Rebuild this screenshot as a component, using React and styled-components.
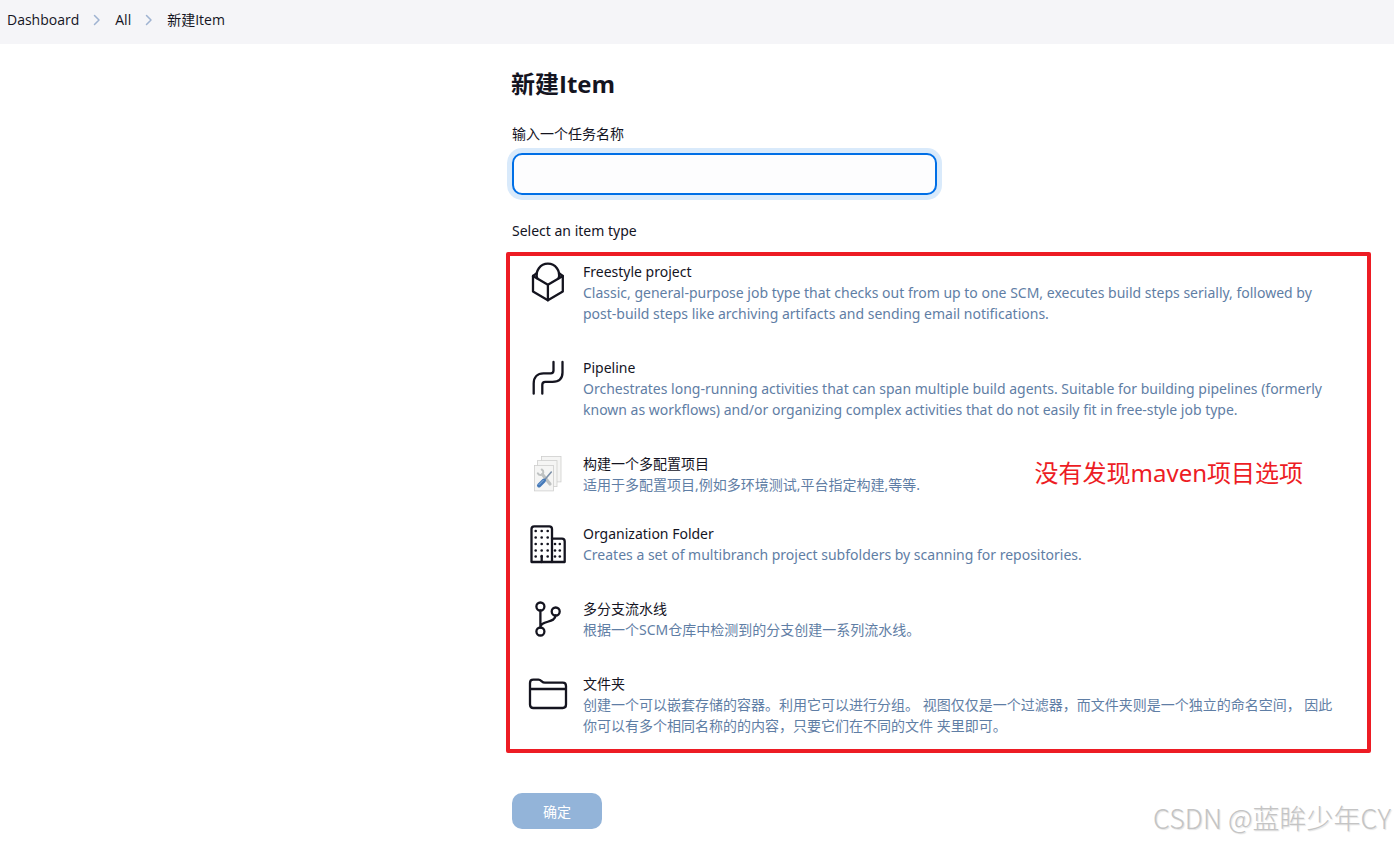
import styled, { createGlobalStyle, css } from 'styled-components';

const GlobalStyle = createGlobalStyle`
  *,
  *::before,
  *::after {
    box-sizing: border-box;
  }

  body {
    margin: 0;
    background-color: #fff;
    color: #14141f;
    font-family: 'Noto Sans', 'Noto Sans CJK SC', sans-serif;
    font-size: 14px;
    line-height: 21px;
  }
`;

const Page = styled.div`
  position: relative;
  min-height: 100vh;
  overflow: hidden;
`;

const BreadcrumbBar = styled.nav`
  background-color: #f5f5f8;
  font-family: 'Open Sans', 'Noto Sans CJK SC', sans-serif;
`;

const BreadcrumbList = styled.ol`
  display: flex;
  align-items: center;
  gap: 14px;
  height: 44px;
  margin: 0;
  padding: 0 7px 5px;
  list-style: none;
`;

const BreadcrumbItem = styled.li`
  display: flex;
  align-items: center;
  gap: 14px;
`;

const BreadcrumbLink = styled.a`
  color: inherit;
  text-decoration: none;
`;

const Layout = styled.div`
  display: grid;
  grid-template-columns: 506px minmax(0, 1fr);
  padding-right: 23px;
`;

const Main = styled.main`
  grid-column: 2;
  padding: 23px 0 14px;
`;

const Form = styled.form`
  display: flex;
  flex-direction: column;
  align-items: flex-start;
`;

const Title = styled.h1`
  margin: 0 0 22px 5px;
  font-family: 'Open Sans', 'Noto Sans CJK SC', sans-serif;
  font-size: 24px;
  font-weight: 700;
  line-height: 34px;
`;

const FieldLabel = styled.label`
  margin: 0 0 9px 6px;
`;

const NameInput = styled.input`
  width: 50%;
  max-width: 425px;
  height: 42px;
  margin: 0 0 25px 6px;
  padding: 8px 12px;
  border: 2px solid #006fe6;
  border-radius: 10px;
  outline: none;
  background-color: #fdfdfe;
  box-shadow: 0 0 0 5px #d9eafb;
  color: inherit;
  font: inherit;
`;

const SectionLabel = styled.div`
  margin: 0 0 11px 6px;
`;

const ItemBox = styled.div`
  position: relative;
  align-self: stretch;
  padding: 5px 26px 13px 17px;
  border: 4px solid #ed1c24;
  border-radius: 2px;
`;

const ItemList = styled.ul`
  margin: 0;
  padding: 0;
  list-style: none;
`;

const Item = styled.li`
  display: flex;
  gap: 14px;
  margin-bottom: ${props => (props.$compact ? '28px' : '33px')};

  &:last-child {
    margin-bottom: 0;
  }
`;

const iconStyle = css`
  flex: none;
  width: 42px;
  height: 42px;
`;

const LineIcon = styled.svg`
  ${iconStyle}
  fill: none;
  stroke: #14141f;
  stroke-width: 2.3;
  stroke-linecap: round;
  stroke-linejoin: round;
`;

const PictureIcon = styled.svg`
  ${iconStyle}
`;

const ItemText = styled.div`
  min-width: 0;
`;

const ItemName = styled.div`
  color: #14141f;
`;

const ItemDescription = styled.div`
  color: #5f7ea5;
`;

const Annotation = styled.div`
  position: absolute;
  top: 201px;
  right: 64px;
  color: #ed1c24;
  font-size: 24px;
  line-height: 32px;
`;

const SubmitButton = styled.button`
  width: 90px;
  height: 36px;
  margin: 40px 0 0 6px;
  border: none;
  border-radius: 10px;
  background-color: #93b4d9;
  color: #fff;
  font: inherit;
`;

const Watermark = styled.div`
  position: absolute;
  right: 3px;
  bottom: 8px;
  color: #c4c4c4;
  font-family: 'Noto Sans CJK SC', sans-serif;
  font-size: 27px;
  font-weight: 300;
  line-height: 34px;
  text-shadow: 1px 1px 1px #e4e4e4;
`;

const Chevron = () => (
  <svg width="8" height="12" viewBox="0 0 8 12" fill="none" aria-hidden="true">
    <path
      d="M1.5 1.5 6 6l-4.5 4.5"
      stroke="#9fb3d1"
      strokeWidth="1.5"
      strokeLinecap="round"
      strokeLinejoin="round"
    />
  </svg>
);

const FreestyleIcon = () => (
  <LineIcon viewBox="0 0 42 42" aria-hidden="true">
    <path d="M10.2 17.2A11.2 11.2 0 1 1 31.6 17.2" />
    <path d="M9.8 12.2 6 15V30.6L20.9 39.3 35.8 30.6V15L32 12.2" />
    <path d="M6 15 20.9 23.8 35.8 15M20.9 23.8V39.3" />
  </LineIcon>
);

const PipelineIcon = () => (
  <LineIcon viewBox="0 0 42 42" aria-hidden="true">
    <path d="M6.7 36.7V26.5C6.7 20 10.5 16.3 16.5 16.3H23.7C25.7 16.3 26.5 15.5 26.5 13.5V5" />
    <path d="M15.3 36.7V27.7C15.3 25.7 16.3 24.8 18.3 24.8H25.5C32 24.8 35.5 21.5 35.5 15.5V5" />
  </LineIcon>
);

const MatrixIcon = () => (
  <PictureIcon viewBox="0 0 42 42" aria-hidden="true">
    <g fill="#f5f5f4" stroke="#cfcfce" strokeWidth="0.8">
      <rect x="14.5" y="3.4" width="19.5" height="25.5" />
      <rect x="10.5" y="7.6" width="19.5" height="26" />
      <rect x="7.4" y="12.4" width="19" height="25.5" />
    </g>
    <g fill="none" strokeLinecap="round">
      <path d="m15.5 21.5 7.5 9.5" stroke="#bfc2c2" strokeWidth="3.2" />
      <path d="M10.8 20.3c1.5 2.8 5 2.2 5.5-.8.2-1.3-.4-2.4-1.6-3" stroke="#bfc2c2" strokeWidth="2" />
      <path d="M24.3 19 17.5 27" stroke="#7d91a9" strokeWidth="1.6" />
      <path d="m17 27.5-5 5" stroke="#4579b8" strokeWidth="4" />
      <path d="m16.3 27.3-4.3 4.3" stroke="#8db4e0" strokeWidth="1" />
    </g>
  </PictureIcon>
);

const OrganizationIcon = () => {
  const rows = [8, 14.5, 21, 27.5, 33.5];
  return (
    <LineIcon viewBox="0 0 42 42" aria-hidden="true">
      <path d="M4.5 39V6Q4.5 3.3 7.2 3.3H22.3Q25 3.3 25 6V39Z" />
      <path d="M25 15.7H35Q37.7 15.7 37.7 18.4V39H25M14.7 33V39" />
      <g fill="#14141f" stroke="none">
        {rows.map(y =>
          [8.7, 14.7, 20.7].map(x => <circle key={`${x}-${y}`} cx={x} cy={y} r="1.3" />)
        )}
        {rows.slice(2).map(y =>
          [28, 32.8].map(x => <circle key={`${x}-${y}`} cx={x} cy={y} r="1.3" />)
        )}
      </g>
    </LineIcon>
  );
};

const BranchIcon = () => (
  <LineIcon viewBox="0 0 42 42" aria-hidden="true">
    <circle cx="13.4" cy="8.5" r="4" />
    <circle cx="28.7" cy="13.5" r="4" />
    <circle cx="13.4" cy="33.5" r="4" />
    <path d="M13.4 12.5V29.5M28.5 17.5C28.5 25.5 13.4 22 13.4 29.5" />
  </LineIcon>
);

const FolderIcon = () => (
  <LineIcon viewBox="0 0 42 42" aria-hidden="true">
    <path d="M3 31V10Q3 6.7 6.3 6.7H11.5C14.5 6.7 14.5 9.7 18 9.7H35.7Q39 9.7 39 13V31.5Q39 35 35.7 35H6.3Q3 35 3 31.5ZM3 16H39" />
  </LineIcon>
);

const breadcrumbs = ['Dashboard', 'All', '新建Item'];

const itemTypes = [
  {
    name: 'Freestyle project',
    description:
      'Classic, general-purpose job type that checks out from up to one SCM, executes build steps serially, followed by post-build steps like archiving artifacts and sending email notifications.',
    Icon: FreestyleIcon
  },
  {
    name: 'Pipeline',
    description:
      'Orchestrates long-running activities that can span multiple build agents. Suitable for building pipelines (formerly known as workflows) and/or organizing complex activities that do not easily fit in free-style job type.',
    Icon: PipelineIcon
  },
  {
    name: '构建一个多配置项目',
    description: '适用于多配置项目,例如多环境测试,平台指定构建,等等.',
    Icon: MatrixIcon,
    compact: true
  },
  {
    name: 'Organization Folder',
    description: 'Creates a set of multibranch project subfolders by scanning for repositories.',
    Icon: OrganizationIcon
  },
  {
    name: '多分支流水线',
    description: '根据一个SCM仓库中检测到的分支创建一系列流水线。',
    Icon: BranchIcon
  },
  {
    name: '文件夹',
    description:
      '创建一个可以嵌套存储的容器。利用它可以进行分组。 视图仅仅是一个过滤器，而文件夹则是一个独立的命名空间， 因此你可以有多个相同名称的的内容，只要它们在不同的文件 夹里即可。',
    Icon: FolderIcon
  }
];

function App() {
  return (
    <>
      <GlobalStyle />
      <Page>
        <BreadcrumbBar aria-label="Breadcrumb">
          <BreadcrumbList>
            {breadcrumbs.map((label, index) => (
              <BreadcrumbItem key={label}>
                {index > 0 && <Chevron />}
                <BreadcrumbLink href="#">{label}</BreadcrumbLink>
              </BreadcrumbItem>
            ))}
          </BreadcrumbList>
        </BreadcrumbBar>

        <Layout>
          <Main>
            <Form onSubmit={e => e.preventDefault()}>
              <Title>新建Item</Title>
              <FieldLabel htmlFor="name">输入一个任务名称</FieldLabel>
              <NameInput id="name" name="name" type="text" autoComplete="off" />

              <SectionLabel id="item-type">Select an item type</SectionLabel>
              <ItemBox>
                <ItemList aria-labelledby="item-type">
                  {itemTypes.map(({ name, description, Icon, compact }) => (
                    <Item key={name} $compact={compact}>
                      <Icon />
                      <ItemText>
                        <ItemName>{name}</ItemName>
                        <ItemDescription>{description}</ItemDescription>
                      </ItemText>
                    </Item>
                  ))}
                </ItemList>
                <Annotation>没有发现maven项目选项</Annotation>
              </ItemBox>

              <SubmitButton type="submit" disabled>
                确定
              </SubmitButton>
            </Form>
          </Main>
        </Layout>

        <Watermark>CSDN @蓝眸少年CY</Watermark>
      </Page>
    </>
  );
}

export default App;
